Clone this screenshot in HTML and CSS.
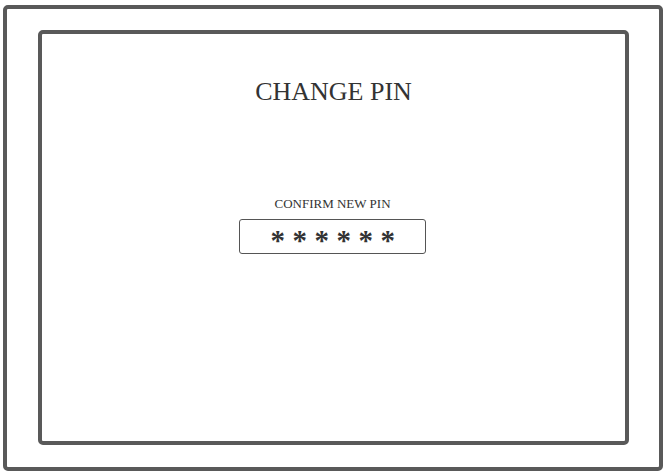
FILE: index.html
```html
<!DOCTYPE html>
<html>
<head>
<meta charset="utf-8">
<link rel="stylesheet" href="styles.css">
</head>
<body>
<div class="outer">
  <div class="inner">
    <h1 class="title">CHANGE PIN</h1>
    <div class="field">
      <div class="label">CONFIRM NEW PIN</div>
      <div class="pinbox"><span>*</span><span>*</span><span>*</span><span>*</span><span>*</span><span>*</span></div>
    </div>
  </div>
</div>
</body>
</html>
```
FILE: styles.css
```css
html, body {
  margin: 0;
  padding: 0;
  background: #ffffff;
}
body {
  font-family: "Liberation Serif", "Times New Roman", serif;
  color: #333333;
}
.outer {
  box-sizing: border-box;
  width: 660px;
  height: 466px;
  margin: 5px 0 0 3px;
  border: 4px solid #595959;
  border-radius: 5px;
  padding: 21px 0 0 31px;
}
.inner {
  box-sizing: border-box;
  width: 591px;
  height: 415px;
  border: 4px solid #595959;
  border-radius: 5px;
  display: flex;
  flex-direction: column;
  align-items: center;
}
.title {
  margin: 43px 0 0 0;
  font-weight: normal;
  font-size: 26px;
  line-height: 30px;
  color: #333333;
}
.field {
  margin-top: 89px;
  display: flex;
  flex-direction: column;
  align-items: center;
  transform: translateX(-1px);
}
.label {
  font-size: 13px;
  line-height: 15px;
  color: #333333;
}
.pinbox {
  box-sizing: border-box;
  margin-top: 8px;
  width: 187px;
  height: 35px;
  border: 1.5px solid #555555;
  border-radius: 3px;
  display: flex;
  align-items: center;
  justify-content: center;
  gap: 8px;
  font-size: 29px;
  font-weight: bold;
  padding-top: 7px;
  color: #333333;
}
.pinbox span {
  display: block;
  width: 14px;
  text-align: center;
  line-height: 30px;
}
```
